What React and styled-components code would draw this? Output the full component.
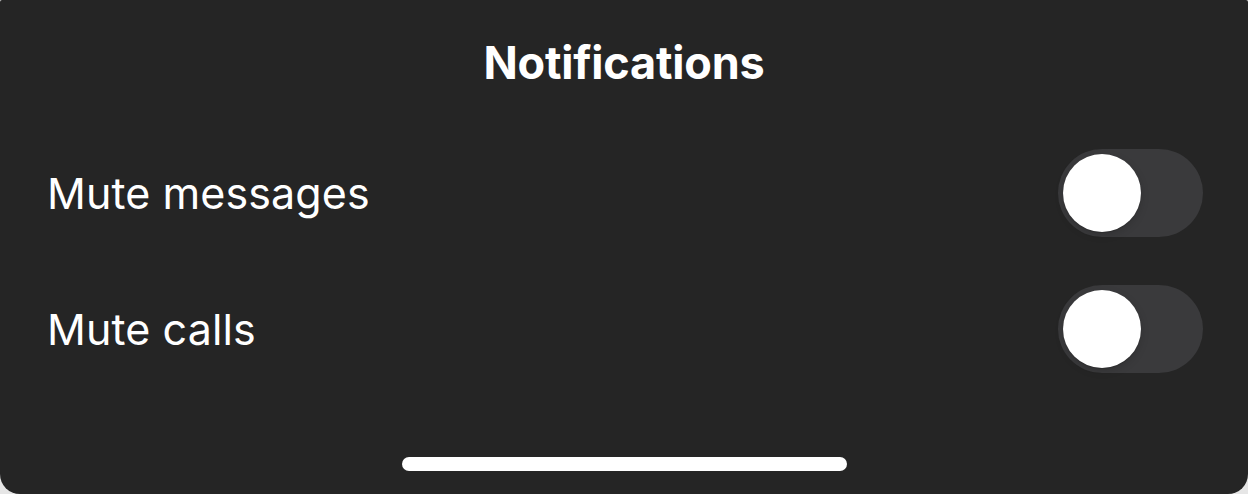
import React, { useState } from 'react';
import styled, { createGlobalStyle } from 'styled-components';

const GlobalStyle = createGlobalStyle`
  html, body {
    margin: 0;
    padding: 0;
    background: #e6e6e6;
  }
  body {
    font-family: Inter, "Noto Sans", "Liberation Sans", sans-serif;
    -webkit-font-smoothing: antialiased;
  }
`

const Sheet = styled.div`
  width: 1248px;
  height: 494px;
  box-sizing: border-box;
  background: #252525;
  border-radius: 2px 2px 20px 20px;
  display: flex;
  flex-direction: column;
  color: #fff;
  overflow: hidden;
`

const Header = styled.div`
  height: 125px;
  display: flex;
  align-items: center;
  justify-content: center;
  h1 {
    margin: 0;
    font-size: 45px;
    font-weight: 700;
    letter-spacing: -0.2px;
    line-height: 1;
  }
`

const Row = styled.div`
  height: 136px;
  display: flex;
  align-items: center;
  justify-content: space-between;
  padding: 0 45px 0 47px;
`

const Label = styled.span`
  font-size: 43px;
  font-weight: 400;
  letter-spacing: 0.1px;
`

const Track = styled.button`
  width: 145px;
  height: 88px;
  border: none;
  border-radius: 44px;
  padding: 0 5px;
  box-sizing: border-box;
  display: flex;
  align-items: center;
  justify-content: ${p => (p.$on ? 'flex-end' : 'flex-start')};
  background: ${p => (p.$on ? '#34c759' : '#3a3a3c')};
  cursor: pointer;
`

const Knob = styled.span`
  width: 78px;
  height: 78px;
  border-radius: 50%;
  background: #fff;
  box-shadow: 0 3px 8px rgba(0, 0, 0, 0.15), 0 1px 1px rgba(0, 0, 0, 0.16);
`

const Footer = styled.div`
  flex: 1;
  display: flex;
  justify-content: center;
  padding-top: 60px;
`

const HomeBar = styled.div`
  width: 445px;
  height: 14px;
  border-radius: 7px;
  background: #fff;
`

function Toggle(props) {
  const { on, onChange } = props;
  return (
    <Track $on={on} onClick={onChange} aria-pressed={on}>
      <Knob />
    </Track>
  )
}

export default function App() {
  const [settings, setSettings] = useState({ messages: false, calls: false });
  const rows = [
    { key: 'messages', label: 'Mute messages' },
    { key: 'calls', label: 'Mute calls' }
  ];
  const flip = key => setSettings(s => ({ ...s, [key]: !s[key] }));

  return (
    <>
      <GlobalStyle />
      <Sheet>
        <Header>
          <h1>Notifications</h1>
        </Header>
        {rows.map(r => (
          <Row key={r.key}>
            <Label>{r.label}</Label>
            <Toggle on={settings[r.key]} onChange={() => flip(r.key)} />
          </Row>
        ))}
        <Footer>
          <HomeBar />
        </Footer>
      </Sheet>
    </>
  )
}
